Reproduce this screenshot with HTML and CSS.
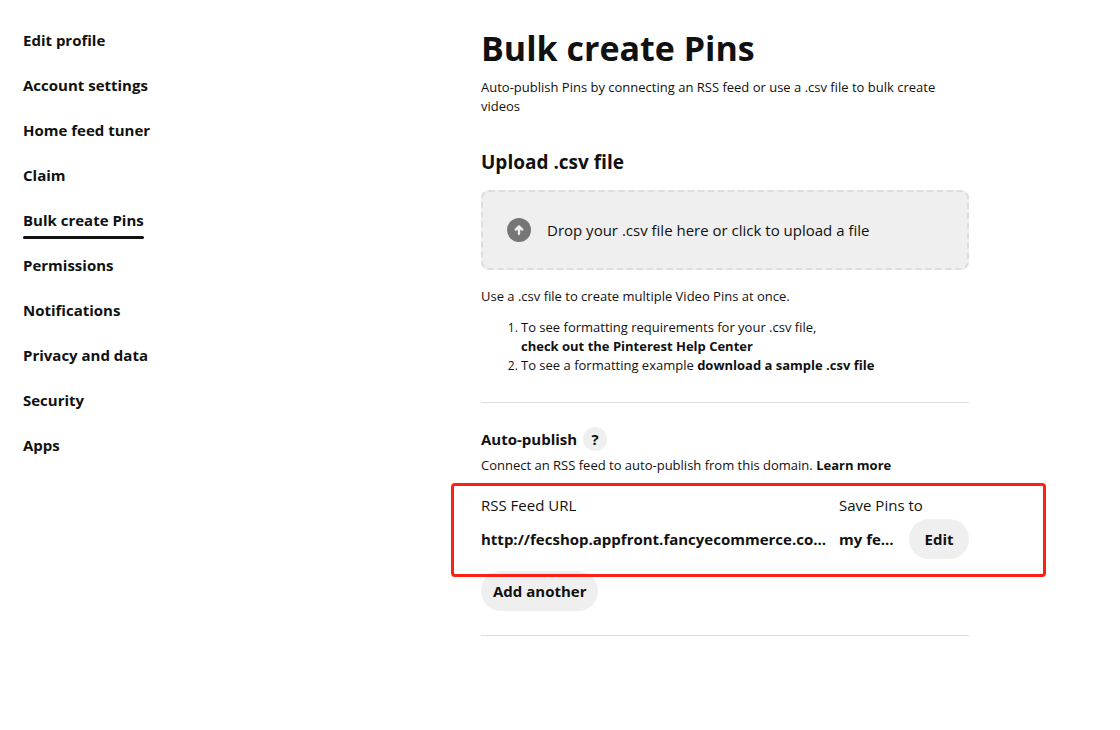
FILE: index.html
```html
<!DOCTYPE html>
<html lang="en">
<head>
<meta charset="utf-8">
<meta name="viewport" content="width=device-width, initial-scale=1">
<title>Bulk create Pins</title>
<link rel="stylesheet" href="styles.css">
</head>
<body>
<div class="layout">
  <nav class="sidebar" aria-label="Settings">
    <a class="nav-link" href="#">Edit profile</a>
    <a class="nav-link" href="#">Account settings</a>
    <a class="nav-link" href="#">Home feed tuner</a>
    <a class="nav-link" href="#">Claim</a>
    <a class="nav-link active" href="#" aria-current="page">Bulk create Pins</a>
    <a class="nav-link" href="#">Permissions</a>
    <a class="nav-link" href="#">Notifications</a>
    <a class="nav-link" href="#">Privacy and data</a>
    <a class="nav-link" href="#">Security</a>
    <a class="nav-link" href="#">Apps</a>
  </nav>
  <main class="content">
    <h1 class="title">Bulk create Pins</h1>
    <p class="text">Auto-publish Pins by connecting an RSS feed or use a .csv file to bulk create videos</p>

    <section class="upload">
      <h2 class="section-title">Upload .csv file</h2>
      <label class="dropzone">
        <input class="file-input" type="file" accept=".csv">
        <svg class="upload-icon" viewBox="0 0 24 24" aria-hidden="true">
          <circle cx="12" cy="12" r="12" fill="#767676"/>
          <path d="M12 15.800V9M8.800 11.600L12 8.400l3.200 3.200" fill="none" stroke="#efefef" stroke-width="2.400" stroke-linecap="round" stroke-linejoin="round"/>
        </svg>
        <span>Drop your .csv file here or click to upload a file</span>
      </label>
      <p class="text">Use a .csv file to create multiple Video Pins at once.</p>
      <ol class="steps">
        <li>To see formatting requirements for your .csv file,<br><a class="link" href="#">check out the Pinterest Help Center</a></li>
        <li>To see a formatting example <a class="link" href="#">download a sample .csv file</a></li>
      </ol>
    </section>

    <section class="auto">
      <div class="auto-head">
        <h3 class="auto-title">Auto-publish</h3>
        <button class="help" type="button" aria-label="Help">?</button>
      </div>
      <p class="text">Connect an RSS feed to auto-publish from this domain. <a class="link" href="#">Learn more</a></p>
      <div class="feed">
        <div class="feed-row feed-labels">
          <span>RSS Feed URL</span>
          <span>Save Pins to</span>
        </div>
        <div class="feed-row feed-values">
          <span class="clip">http://fecshop.appfront.fancyecommerce.co…</span>
          <span class="clip">my fe…</span>
          <button class="pill edit" type="button">Edit</button>
        </div>
        <div class="highlight"></div>
      </div>
      <button class="pill add" type="button">Add another</button>
    </section>
  </main>
</div>
</body>
</html>
```
FILE: styles.css
```css
* {
  box-sizing: border-box;
}

body {
  margin: 0;
  background: #fff;
  color: #111;
  font: 13px/19px "Open Sans", "Noto Sans", sans-serif;
}

h1, h2, h3, p, ol {
  margin: 0;
}

a {
  color: inherit;
  text-decoration: none;
}

button {
  border: 0;
  padding: 0;
  background: #efefef;
  color: inherit;
  font: 700 15px/20px "Open Sans", "Noto Sans", sans-serif;
  cursor: pointer;
}

.layout {
  display: grid;
  grid-template-columns: minmax(160px, 458px) minmax(0, 488px);
  padding: 26px 23px;
}

.sidebar {
  display: flex;
  flex-direction: column;
  align-items: flex-start;
  gap: 12px;
}

.nav-link {
  position: relative;
  padding: 4px 0 9px;
  font-size: 15px;
  line-height: 20px;
  font-weight: 700;
}

.nav-link.active::after {
  content: "";
  position: absolute;
  inset: auto 0 0;
  height: 3px;
  border-radius: 2px;
  background: #111;
}

.title {
  font-size: 34px;
  line-height: 44px;
  font-weight: 700;
  margin-bottom: 8px;
}

.upload {
  padding: 32px 0 27px;
  border-bottom: 1px solid #ddd;
}

.section-title {
  font-size: 19px;
  line-height: 28px;
  margin-bottom: 14px;
}

.dropzone {
  position: relative;
  display: flex;
  align-items: center;
  gap: 16px;
  height: 80px;
  margin-bottom: 17px;
  padding: 0 24px;
  border: 2px dashed #ddd;
  border-radius: 8px;
  background: #efefef;
  font-size: 15px;
  line-height: 24px;
  cursor: pointer;
}

.file-input {
  position: absolute;
  inset: 0;
  opacity: 0;
}

.upload-icon {
  flex: none;
  width: 24px;
  height: 24px;
}

.steps {
  margin-top: 12px;
  padding-left: 40px;
}

.steps li::marker {
  font-size: 12px;
}

.link {
  font-weight: 700;
}

.auto {
  padding: 24px 0;
  border-bottom: 1px solid #ddd;
}

.auto-head {
  display: flex;
  align-items: center;
  gap: 6px;
  margin-bottom: 5px;
}

.auto-title {
  font-size: 15px;
  line-height: 24px;
}

.help {
  width: 24px;
  height: 24px;
  border-radius: 50%;
}

.feed {
  position: relative;
  padding: 20px 0 12px;
}

.feed-row {
  display: grid;
  grid-template-columns: minmax(0, 348px) 60px 60px;
  gap: 10px;
  align-items: center;
}

.feed-labels {
  grid-template-columns: minmax(0, 348px) 130px;
  padding-bottom: 4px;
  font-size: 15px;
  line-height: 20px;
}

.feed-values {
  font-size: 15px;
  line-height: 24px;
  font-weight: 700;
}

.clip {
  overflow: hidden;
  white-space: nowrap;
}

.pill {
  height: 40px;
  border-radius: 20px;
}

.add {
  display: block;
  padding: 0 12px;
}

.highlight {
  position: absolute;
  inset: 8px -77px -6px -30px;
  border: 3px solid #ff2015;
  border-radius: 4px;
  pointer-events: none;
}
```
